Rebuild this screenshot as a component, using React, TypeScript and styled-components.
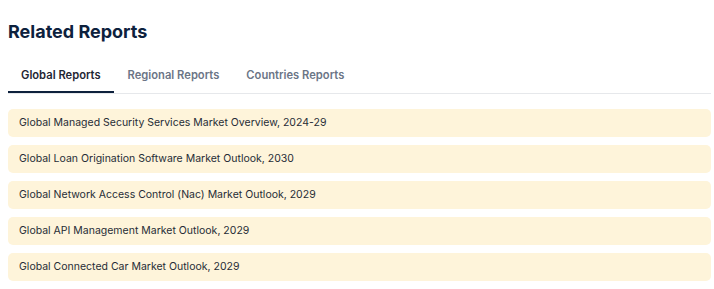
import styled, { createGlobalStyle } from 'styled-components';

const GlobalStyle = createGlobalStyle`
	body {
		margin: 0;
		background: #fff;
		font-family: 'Inter', 'Liberation Sans', sans-serif;
	}
`;

const Page = styled.div`
	padding: 0 3px 8px 8px;
`;

const Title = styled.h2`
	margin: 0;
	padding-top: 19.5px;
	font-size: 18px;
	line-height: 24px;
	font-weight: 700;
	color: #0d213d;
`;

const TabBar = styled.div`
	display: flex;
	margin-top: 11.5px;
	border-bottom: 1px solid #e6e8eb;
`;

const Tab = styled.div<{ $active?: boolean }>`
	padding: 12px 13px 8px;
	font-size: 11.2px;
	line-height: 16px;
	font-weight: 600;
	color: ${(p) => (p.$active ? '#1f2633' : '#6b7586')};
	border-bottom: 2px solid ${(p) => (p.$active ? '#0d213d' : 'transparent')};
	margin-right: 1px;
	cursor: pointer;
`;

const List = styled.div`
	display: flex;
	flex-direction: column;
	gap: 8px;
	margin-top: 15px;
`;

const Item = styled.div`
	display: flex;
	align-items: center;
	height: 28px;
	padding: 0 11px;
	background-color: #fef4da;
	border-radius: 5px;
	font-size: 10.5px;
	line-height: 16px;
	color: #262c36;
`;

export default function App() {
	const tabs = ['Global Reports', 'Regional Reports', 'Countries Reports'];
	const reports = [
		'Global Managed Security Services Market Overview, 2024-29',
		'Global Loan Origination Software Market Outlook, 2030',
		'Global Network Access Control (Nac) Market Outlook, 2029',
		'Global API Management Market Outlook, 2029',
		'Global Connected Car Market Outlook, 2029',
	];

	return (
		<Page>
			<GlobalStyle />
			<Title>Related Reports</Title>
			<TabBar>
				{tabs.map((tab, i) => (
					<Tab key={tab} $active={i === 0}>
						{tab}
					</Tab>
				))}
			</TabBar>
			<List>
				{reports.map((report) => (
					<Item key={report}>{report}</Item>
				))}
			</List>
		</Page>
	);
}
